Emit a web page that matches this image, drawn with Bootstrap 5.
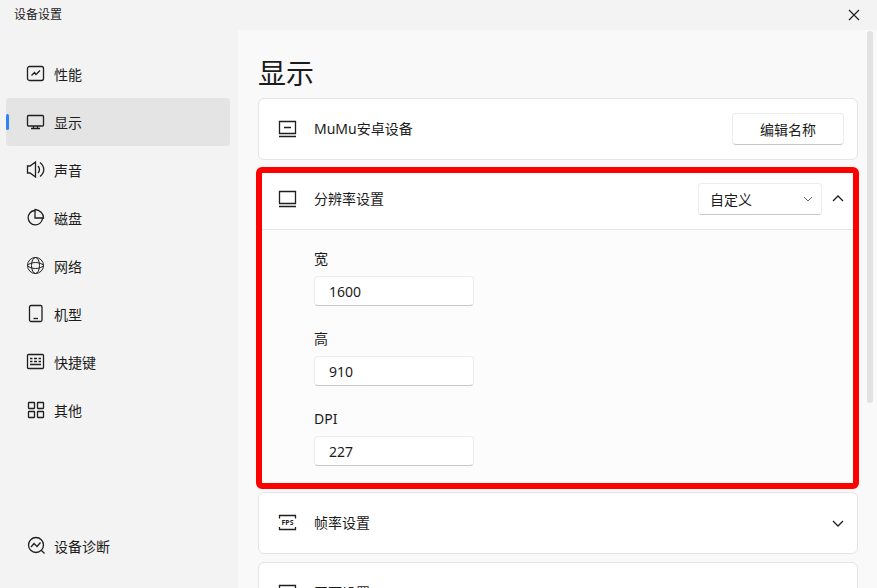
<!DOCTYPE html>
<html lang="zh-CN">
<head>
<meta charset="utf-8">
<meta name="viewport" content="width=device-width, initial-scale=1">
<title>设备设置</title>
<link href="https://cdn.jsdelivr.net/npm/bootstrap@5.3.0/dist/css/bootstrap.min.css" rel="stylesheet">
<style>
  body { font-family: "Noto Sans", "Noto Sans CJK SC", sans-serif; font-size: 14px; line-height: 20px; color: #1b1b1b; background: #f3f3f3; }
  svg { fill: none; stroke: #1f1f1f; stroke-width: 1.3; flex: none; display: block; }
  svg.fine { stroke-width: 1; }
  .title-bar { height: 30px; padding: 0 16px 0 14px; font-size: 12px; }
  .close-btn svg { stroke-width: 1.2; }
  .side { width: 238px; padding: 20px 8px 18px 6px; }
  .side .nav-link { height: 48px; padding: 0 0 0 20px; gap: 8px; color: inherit; border-radius: 4px; position: relative; }
  .side .nav-link span { padding-top: 2px; }
  .side .nav-link.active { background: #e4e4e4; }
  .side .nav-link.active::before { content: ""; position: absolute; left: 0; top: 16px; width: 3px; height: 16px; border-radius: 2px; background: #2f80ff; }
  .main-pane { background: #f9f9f9; padding: 23px 4px 0 20px; gap: 9px; }
  .page-title { font-size: 28px; line-height: 40px; font-weight: 400; margin-bottom: 5px; }
  .panel { background: #fff; border: 1px solid #e5e5e5; border-radius: 6px; margin-bottom: 8px; }
  .panel-head { min-height: 60px; padding: 0 11px 0 19px; gap: 16px; }
  .marked { border: 6px solid #f00; border-radius: 6px; margin: -1px -1px 3px -2px; }
  .marked .panel-head { padding: 0 7px 4px 16px; border-bottom: 1px solid #e5e5e5; min-height: 57px; }
  .marked .fields { padding: 18px 52px 17px; gap: 22px; background: #fcfcfc; }
  .fields .form-label { line-height: 22px; margin-bottom: 6px; }
  .field-box, .flat-btn { background-color: #fff; border: 1px solid #ececec; border-bottom-color: #c8c8c8; border-radius: 4px; font-size: 14px; color: inherit; }
  .field-box.form-control { width: 160px; height: 30px; padding: 0 14px; }
  .field-box.form-select { width: 124px; height: 32px; padding: 0 30px 0 11px; background-position: right 8px center; background-size: 10px 10px;
    background-image: url("data:image/svg+xml,%3csvg xmlns='http://www.w3.org/2000/svg' viewBox='0 0 10 10'%3e%3cpath d='M1 3l4 4 4-4' fill='none' stroke='%23666'/%3e%3c/svg%3e"); }
  .flat-btn { width: 112px; height: 32px; padding: 0; margin-right: 2px; }
  .scroll-thumb { width: 6px; height: 372px; border-radius: 3px; background: #e2e2e2; margin-top: -22px; }
</style>
<script src="https://cdn.jsdelivr.net/npm/bootstrap@5.3.0/dist/js/bootstrap.bundle.min.js"></script>
</head>
<body class="vh-100 d-flex flex-column overflow-hidden">
  <header class="title-bar d-flex align-items-center justify-content-between flex-shrink-0">
    <span>设备设置</span>
    <button type="button" class="close-btn btn p-0 border-0" aria-label="关闭">
      <svg width="14" height="14" viewBox="0 0 14 14"><path d="M2 2l10 10M12 2L2 12"/></svg>
    </button>
  </header>
  <div class="d-flex flex-grow-1 overflow-hidden">
    <nav class="side nav flex-column flex-nowrap flex-shrink-0">
      <a href="#" class="nav-link d-flex align-items-center">
        <svg width="20" height="20" viewBox="0 0 20 20"><rect x="1.5" y="2.5" width="16" height="14" rx="2"/><path d="M5.500 11.500l3-3 1.500 2 4-4"/></svg><span>性能</span></a>
      <a href="#" class="nav-link active d-flex align-items-center" aria-current="page">
        <svg width="20" height="20" viewBox="0 0 20 20"><rect x="1.5" y="3.5" width="16" height="10.500" rx="1"/><path d="M7.500 14v3M11.500 14v3M5 16.500h9"/></svg><span>显示</span></a>
      <a href="#" class="nav-link d-flex align-items-center">
        <svg width="20" height="20" viewBox="0 0 20 20"><path d="M1.500 6h2.500L9.500 2v15L4 13H1.500zM12 6q3 3.500 0 7M14 2.500c5 4 5 10 0 14"/></svg><span>声音</span></a>
      <a href="#" class="nav-link d-flex align-items-center">
        <svg width="20" height="20" viewBox="0 0 20 20"><path d="M8.500 2.500a7.200 7.200 0 1 0 8 8M9 1.500V10h8.500C17.500 5.500 14 2 9 1.500z"/></svg><span>磁盘</span></a>
      <a href="#" class="nav-link d-flex align-items-center">
        <svg class="fine" width="20" height="20" viewBox="0 0 20 20"><circle cx="9.500" cy="9.500" r="8"/><ellipse cx="9.500" cy="9.500" rx="4" ry="8"/><path d="M1.500 9.500c3-4 13-4 16 0c-3 4-13 4-16 0"/></svg><span>网络</span></a>
      <a href="#" class="nav-link d-flex align-items-center">
        <svg width="20" height="20" viewBox="0 0 20 20"><rect x="3.500" y="1.500" width="12.500" height="16" rx="1.500"/><path d="M7.500 14.500h4.500"/></svg><span>机型</span></a>
      <a href="#" class="nav-link d-flex align-items-center">
        <svg width="20" height="20" viewBox="0 0 20 20"><rect x="1.500" y="2.500" width="16" height="14" rx="1"/><path d="M4 6.500h2.500M8 6.500h3M12.500 6.500H15M4 9.500h2.500M8 9.500h3M12.500 9.500H15M4 12.500h11"/></svg><span>快捷键</span></a>
      <a href="#" class="nav-link d-flex align-items-center">
        <svg width="20" height="20" viewBox="0 0 20 20"><rect x="2.500" y="2.500" width="6" height="6" rx=".5"/><rect x="11.500" y="2.500" width="6" height="6" rx=".5"/><rect x="2.500" y="11.500" width="6" height="6" rx=".5"/><rect x="11.500" y="11.500" width="6" height="6" rx=".5"/></svg><span>其他</span></a>
      <a href="#" class="nav-link d-flex align-items-center mt-auto">
        <svg width="20" height="20" viewBox="0 0 20 20"><circle cx="10" cy="9" r="7.500"/><path d="M15.500 14.500l3 3M5 11l3-3.500 3 3 3.500-4"/></svg><span>设备诊断</span></a>
    </nav>
    <main class="main-pane flex-grow-1 d-flex align-items-start overflow-hidden">
      <div class="flex-grow-1">
        <h1 class="page-title">显示</h1>
        <section class="panel">
          <div class="panel-head d-flex align-items-center">
            <svg width="20" height="20" viewBox="0 0 20 20"><path d="M1.500 2.500h16v12h-16zM1 17.500h17M6 8.500h7"/></svg>
            <span class="flex-grow-1">MuMu安卓设备</span>
            <button type="button" class="flat-btn btn">编辑名称</button>
          </div>
        </section>
        <section class="panel marked">
          <div class="panel-head d-flex align-items-center">
            <svg width="20" height="20" viewBox="0 0 20 20"><path d="M1.500 2.500h16v12h-16zM1 17.500h17"/></svg>
            <label class="flex-grow-1" for="resolution">分辨率设置</label>
            <div class="d-flex align-items-center gap-2">
              <select id="resolution" class="field-box form-select"><option>自定义</option></select>
              <button type="button" class="btn p-0 border-0" aria-label="收起"><svg width="16" height="16" viewBox="0 0 16 16"><path d="M3 10l5-5 5 5"/></svg></button>
            </div>
          </div>
          <form class="fields d-flex flex-column">
            <div><label class="form-label d-block" for="w">宽</label><input id="w" class="field-box form-control" value="1600"></div>
            <div><label class="form-label d-block" for="h">高</label><input id="h" class="field-box form-control" value="910"></div>
            <div><label class="form-label d-block" for="dpi">DPI</label><input id="dpi" class="field-box form-control" value="227"></div>
          </form>
        </section>
        <section class="panel">
          <div class="panel-head d-flex align-items-center">
            <svg width="20" height="20" viewBox="0 0 20 20"><path d="M1.500 5.500V2.500h16v3M1.500 14v2.500h16V14"/><text x="9.500" y="12" text-anchor="middle" font-size="7" font-weight="700" fill="#1f1f1f" stroke="none">FPS</text></svg>
            <span class="flex-grow-1">帧率设置</span>
            <button type="button" class="btn p-0 border-0" aria-label="展开"><svg width="16" height="16" viewBox="0 0 16 16"><path d="M3 6l5 5 5-5"/></svg></button>
          </div>
        </section>
        <section class="panel">
          <div class="panel-head d-flex align-items-center">
            <svg width="20" height="20" viewBox="0 0 20 20"><path d="M1.500 2.500h16v14h-16z"/></svg>
            <span class="flex-grow-1">画面设置</span>
            <button type="button" class="btn p-0 border-0" aria-label="展开"><svg width="16" height="16" viewBox="0 0 16 16"><path d="M3 6l5 5 5-5"/></svg></button>
          </div>
        </section>
      </div>
      <div class="scroll-thumb flex-shrink-0"></div>
    </main>
  </div>
</body>
</html>
